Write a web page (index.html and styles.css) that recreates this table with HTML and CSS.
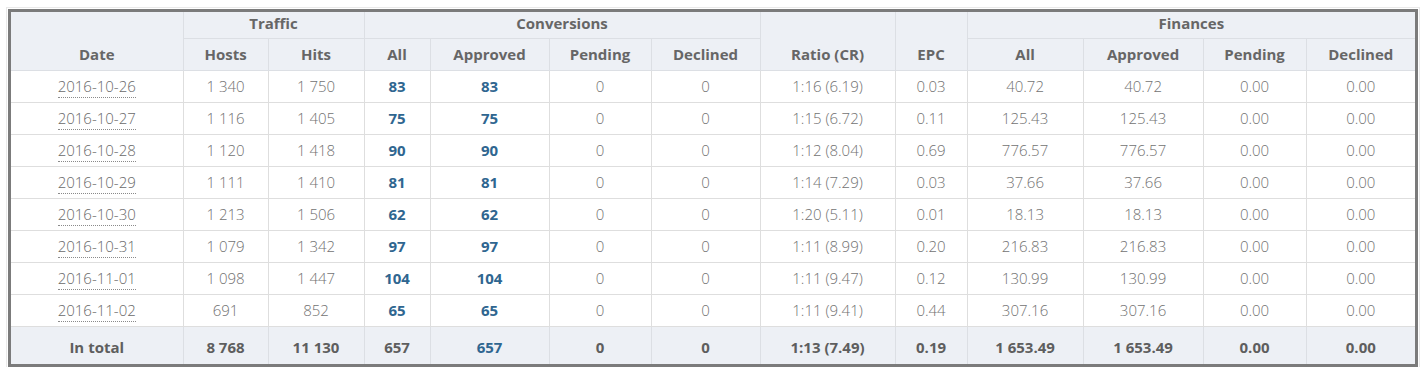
FILE: index.html
```html
<!DOCTYPE html>
<html>
<head>
<meta charset="utf-8">
<link rel="stylesheet" href="styles.css">
</head>
<body>
<div class="frame">
<table class="stats">
<colgroup>
<col class="c-date"><col class="c-hosts"><col class="c-hits"><col class="c-all"><col class="c-appr"><col class="c-pend"><col class="c-decl"><col class="c-ratio"><col class="c-epc"><col class="c-fall"><col class="c-fappr"><col class="c-fpend"><col class="c-fdecl">
</colgroup>
<thead>
<tr class="h1">
<th rowspan="2" class="first">Date</th>
<th colspan="2">Traffic</th>
<th colspan="4">Conversions</th>
<th rowspan="2">Ratio (CR)</th>
<th rowspan="2">EPC</th>
<th colspan="4">Finances</th>
</tr>
<tr class="h2">
<th>Hosts</th><th>Hits</th><th>All</th><th>Approved</th><th>Pending</th><th>Declined</th><th>All</th><th>Approved</th><th>Pending</th><th>Declined</th>
</tr>
</thead>
<tbody>
<tr><td class="first"><span class="dt">2016-10-26</span></td><td>1 340</td><td>1 750</td><td class="blue">83</td><td class="blue">83</td><td>0</td><td>0</td><td>1:16 (6.19)</td><td>0.03</td><td>40.72</td><td>40.72</td><td>0.00</td><td>0.00</td></tr>
<tr><td class="first"><span class="dt">2016-10-27</span></td><td>1 116</td><td>1 405</td><td class="blue">75</td><td class="blue">75</td><td>0</td><td>0</td><td>1:15 (6.72)</td><td>0.11</td><td>125.43</td><td>125.43</td><td>0.00</td><td>0.00</td></tr>
<tr><td class="first"><span class="dt">2016-10-28</span></td><td>1 120</td><td>1 418</td><td class="blue">90</td><td class="blue">90</td><td>0</td><td>0</td><td>1:12 (8.04)</td><td>0.69</td><td>776.57</td><td>776.57</td><td>0.00</td><td>0.00</td></tr>
<tr><td class="first"><span class="dt">2016-10-29</span></td><td>1 111</td><td>1 410</td><td class="blue">81</td><td class="blue">81</td><td>0</td><td>0</td><td>1:14 (7.29)</td><td>0.03</td><td>37.66</td><td>37.66</td><td>0.00</td><td>0.00</td></tr>
<tr><td class="first"><span class="dt">2016-10-30</span></td><td>1 213</td><td>1 506</td><td class="blue">62</td><td class="blue">62</td><td>0</td><td>0</td><td>1:20 (5.11)</td><td>0.01</td><td>18.13</td><td>18.13</td><td>0.00</td><td>0.00</td></tr>
<tr><td class="first"><span class="dt">2016-10-31</span></td><td>1 079</td><td>1 342</td><td class="blue">97</td><td class="blue">97</td><td>0</td><td>0</td><td>1:11 (8.99)</td><td>0.20</td><td>216.83</td><td>216.83</td><td>0.00</td><td>0.00</td></tr>
<tr><td class="first"><span class="dt">2016-11-01</span></td><td>1 098</td><td>1 447</td><td class="blue">104</td><td class="blue">104</td><td>0</td><td>0</td><td>1:11 (9.47)</td><td>0.12</td><td>130.99</td><td>130.99</td><td>0.00</td><td>0.00</td></tr>
<tr><td class="first"><span class="dt">2016-11-02</span></td><td>691</td><td>852</td><td class="blue">65</td><td class="blue">65</td><td>0</td><td>0</td><td>1:11 (9.41)</td><td>0.44</td><td>307.16</td><td>307.16</td><td>0.00</td><td>0.00</td></tr>
</tbody>
<tfoot>
<tr><td class="first">In total</td><td>8 768</td><td>11 130</td><td>657</td><td class="blue">657</td><td>0</td><td>0</td><td>1:13 (7.49)</td><td>0.19</td><td>1 653.49</td><td>1 653.49</td><td>0.00</td><td>0.00</td></tr>
</tfoot>
</table>
</div>
</body>
</html>
```

FILE: styles.css
```css
html, body {
  margin: 0;
  padding: 0;
  background: #ffffff;
}
body {
  padding: 9px 7px 0 8px;
  font-family: "Open Sans", "Noto Sans", sans-serif;
}
.frame {
  width: 1404px;
  border: 3px solid #7b7b7b;
  outline: 1px solid #e9e9e9;
  outline-offset: 1px;
}
.stats {
  width: 1404px;
  table-layout: fixed;
  border-collapse: collapse;
  border-spacing: 0;
  font-size: 15px;
  line-height: 20px;
}
.c-date { width: 172px; }
.c-hosts { width: 85px; }
.c-hits { width: 96px; }
.c-all { width: 66px; }
.c-appr { width: 119px; }
.c-pend { width: 102px; }
.c-decl { width: 109px; }
.c-ratio { width: 135px; }
.c-epc { width: 72px; }
.c-fall { width: 116px; }
.c-fappr { width: 120px; }
.c-fpend { width: 103px; }
.c-fdecl { width: 109px; }

.stats th, .stats td {
  padding: 0 4px;
  text-align: center;
  border: 1px solid #dcdfe4;
  white-space: nowrap;
}
.stats tr > :first-child { border-left: none; }
.stats tr > :last-child { border-right: none; }
.stats thead tr.h1 > * { border-top: none; }
.stats tfoot tr > * { border-bottom: none; }

.stats th {
  background: #edf0f5;
  color: #666666;
  font-weight: 700;
  vertical-align: bottom;
  padding-bottom: 6px;
}
.stats tr.h1 { height: 26px; }
.stats tr.h1 th { vertical-align: top; padding-top: 1px; padding-bottom: 0; }
.stats tr.h1 th[rowspan] { vertical-align: bottom; padding-bottom: 6px; }
.stats tr.h2 { height: 32px; }

.stats tbody tr { height: 32px; }
.stats tbody td {
  color: #727272;
  font-weight: 300;
  vertical-align: middle;
  border-color: #dedede;
}
.stats td.blue {
  color: #2f6690;
  font-weight: 700;
}
.dt {
  color: #6a6a6a;
  border-bottom: 1px dotted #8a8a8a;
  padding-bottom: 1px;
}
.stats tfoot tr { height: 38px; }
.stats tfoot td {
  background: #edf0f5;
  color: #5e5e5e;
  font-weight: 700;
  vertical-align: middle;
  padding-top: 3px;
  border-color: #dcdfe4;
}
.stats tfoot td.blue { color: #2f6690; }
```
